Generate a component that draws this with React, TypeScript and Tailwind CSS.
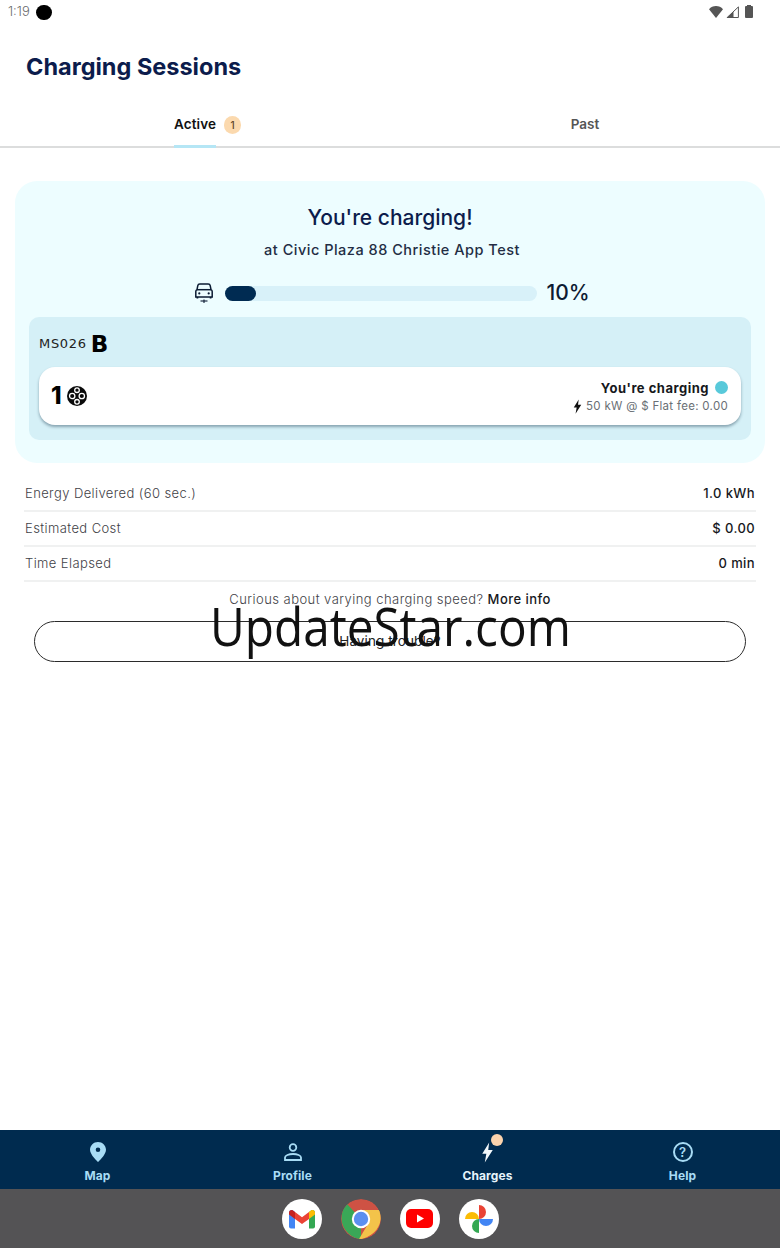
function Bolt({ className }: { className?: string }) {
  return (
    <svg viewBox="0 0 12 20" className={className} fill="currentColor">
      <path d="M7.600 0.500 1 11.200h3.900L3.400 19.500 11 7.600H6.700z" />
    </svg>
  );
}

function CarIcon() {
  return (
    <svg viewBox="0 0 18 20" className="h-[20px] w-[18px] text-[#0b1b33]" fill="none" stroke="currentColor" strokeWidth="1.500">
      <path d="M2.800 2.600C3 1.500 3.800 1 4.800 1h8.400c1 0 1.800.5 2 1.600l.8 4c.8.4 1.200 1 1.200 1.900V14H.8V8.500c0-.9.4-1.500 1.200-1.900z" />
      <path d="M2 6.700h14" />
      <circle cx="4.300" cy="10.400" r="1.100" fill="currentColor" stroke="none" />
      <circle cx="13.700" cy="10.400" r="1.100" fill="currentColor" stroke="none" />
      <path d="M2.400 14v1.400M15.600 14v1.400" strokeWidth="1.800" />
      <path d="M5.500 18h7" strokeWidth="1.100" />
      <path d="M9 16.500v3.500" strokeWidth="1.100" />
    </svg>
  );
}

function ConnectorIcon() {
  return (
    <svg viewBox="0 0 20 20" className="h-[20px] w-[20px]">
      <circle cx="10" cy="10" r="10" fill="#0a0a0a" />
      {[
        [10, 4.200, 2.300],
        [5.200, 10, 2.700],
        [14.800, 10, 2.700],
        [10, 15.800, 2.300],
      ].map(([cx, cy, r]) => (
        <circle key={`${cx}-${cy}`} cx={cx} cy={cy} r={r} fill="none" stroke="#fff" strokeWidth="1.300" />
      ))}
    </svg>
  );
}

function StatRow({ label, value }: { label: string; value: string }) {
  return (
    <div className="flex h-[35px] items-center justify-between border-b-2 border-[#f0f1f1] pt-[1px] text-[13px] tracking-[0.4px]">
      <span className="pl-[1px] font-light text-[#3f4247]">{label}</span>
      <span className="pr-[1px] font-medium text-[#16181c]">{value}</span>
    </div>
  );
}

function NavItem({ label, icon, active }: { label: string; icon: React.ReactNode; active?: boolean }) {
  return (
    <div className="relative flex flex-1 flex-col items-center pt-[9px]">
      <div className="flex h-[26px] items-center justify-center">{icon}</div>
      <span className={`mt-[3px] text-[12px] leading-[16px] font-bold tracking-[0.1px] ${active ? "text-[#e6f4fb]" : "text-[#a8dcf5]"}`}>{label}</span>
    </div>
  );
}

function DockIcon({ children }: { children: React.ReactNode }) {
  return <div className="flex h-10 w-10 items-center justify-center rounded-full bg-white">{children}</div>;
}

export default function App() {
  return (
    <div className="relative flex h-[1248px] w-[780px] flex-col overflow-hidden bg-white font-['Inter',sans-serif]">
      {/* Status bar */}
      <div className="flex h-6 shrink-0 items-center justify-between pr-[27px] pl-[8px]">
        <div className="flex items-center gap-[6px]">
          <span className="text-[13px] font-light text-[#6b6b6b]">1:19</span>
          <div className="h-[15px] w-[16px] rounded-full bg-black" />
        </div>
        <div className="flex items-center gap-[3px]">
          <svg viewBox="0 0 14 12" className="h-[12px] w-[14px]">
            <path d="M0 3.200C1.800 1.200 4.200 0 7 0s5.200 1.200 7 3.200L7 12z" fill="#555" />
          </svg>
          <svg viewBox="0 0 13 12" className="h-[12px] w-[13px]">
            <path d="M12.400.9V11.500H1.200z" fill="none" stroke="#555" strokeWidth="1" />
            <path d="M7.500 5.500V12H0.500z" fill="#555" />
          </svg>
          <div className="relative ml-[3px] h-[12px] w-[8px] rounded-[1px] bg-[#555]">
            <div className="absolute -top-[1px] left-[2px] h-[1px] w-[4px] bg-[#555]" />
          </div>
        </div>
      </div>

      <h1 className="mt-[28px] pl-[26px] text-[23.500px] leading-[30px] font-bold text-[#0c1c4c]">Charging Sessions</h1>

      {/* Tabs */}
      <div className="mt-[25px] flex h-[41px] shrink-0 border-b-2 border-[#dcdddd]">
        <div className="flex flex-1 items-start justify-center pt-[8px]">
          <div className="ml-[25px] flex items-center gap-[8px]">
            <span className="relative text-[13.500px] leading-[18px] font-semibold tracking-[0.1px] text-[#111]">
              Active
              <span className="absolute top-[30px] left-0 h-[3px] w-full bg-[#b5e6f5]" />
            </span>
            <span className="relative top-[1px] flex h-[18px] w-[17px] items-center justify-center rounded-full bg-[#fbd9ae] text-[10px] font-medium text-[#5e4427]">1</span>
          </div>
        </div>
        <div className="flex flex-1 items-start justify-center pt-[8px]">
          <span className="text-[13.500px] leading-[18px] font-semibold text-[#555]">Past</span>
        </div>
      </div>

      {/* Active session card */}
      <div className="mx-[15px] mt-[33px] flex h-[282px] shrink-0 flex-col items-center rounded-[22px] bg-[#edfdff] px-[14px]">
        <h2 className="mt-[23px] text-[21px] leading-[28px] font-medium text-[#0c1c4c]">You're charging!</h2>
        <p className="mt-[8px] ml-[4px] text-[14.500px] leading-[20px] font-medium tracking-[0.5px] text-[#232d44]">at Civic Plaza 88 Christie App Test</p>

        <div className="mt-[19px] ml-[5px] flex items-center">
          <CarIcon />
          <div className="mr-[9px] ml-[12px] h-[15px] w-[312px] rounded-full bg-[#d8f1f9]">
            <div className="h-full w-[31px] rounded-full bg-[#002b52]" />
          </div>
          <span className="text-[21px] leading-[28px] font-medium text-[#0d1b33]">10%</span>
        </div>

        <div className="mt-[10px] flex h-[123px] w-full flex-col rounded-[10px] bg-[#d5f0f7] px-[10px]">
          <div className="flex h-[50px] items-center gap-[4px] pt-[4px] font-['DejaVu_Sans',sans-serif]">
            <span className="text-[13px] tracking-[0.7px] text-[#222]">MS026</span>
            <span className="text-[23px] leading-none font-bold text-black">B</span>
          </div>
          <div className="flex h-[58px] w-[702px] items-center justify-between rounded-[16px] bg-white pr-[13px] pl-[12px] shadow-[0_2px_3px_rgba(40,70,90,0.45)]">
            <div className="flex items-center gap-[5px]">
              <span className="text-[24px] leading-none font-extrabold text-black">1</span>
              <ConnectorIcon />
            </div>
            <div className="flex flex-col items-end gap-[3px] pt-[1px]">
              <div className="flex items-center gap-[6px]">
                <span className="text-[13px] leading-[16px] font-bold tracking-[0.5px] text-[#16181c]">You're charging</span>
                <div className="h-[13px] w-[13px] rounded-full bg-[#58c9da]" />
              </div>
              <div className="flex items-center gap-[4px]">
                <Bolt className="h-[15px] w-[9px] text-[#111]" />
                <span className="text-[11.500px] leading-[15px] tracking-[0.3px] text-[#6a6f75]">50 kW @ $ Flat fee: 0.00</span>
              </div>
            </div>
          </div>
        </div>
      </div>

      {/* Session stats */}
      <div className="mx-[24px] mt-[14px] flex shrink-0 flex-col">
        <StatRow label="Energy Delivered (60 sec.)" value="1.0 kWh" />
        <StatRow label="Estimated Cost" value="$ 0.00" />
        <StatRow label="Time Elapsed" value="0 min" />
      </div>

      <p className="mt-[8px] text-center text-[13px] leading-[18px] font-light tracking-[0.45px] text-[#3f4247]">
        Curious about varying charging speed? <span className="font-medium text-[#16181c]">More info</span>
      </p>

      <button className="mx-[34px] mt-[13px] flex h-[41px] shrink-0 items-center justify-center rounded-full border border-[#2b2b2b] text-[13.500px] tracking-[0.1px] text-[#222]">
        Having trouble?
      </button>

      <div className="flex-1" />

      {/* Bottom nav */}
      <nav className="flex h-[59px] shrink-0 bg-[#002b4f]">
        <NavItem
          label="Map"
          icon={
            <svg viewBox="0 0 16 20" className="h-[20px] w-[16px]">
              <path fillRule="evenodd" fill="#a8dcf5" d="M8 0C3.600 0 0 3.400 0 7.800 0 13 8 20 8 20s8-7 8-12.200C16 3.400 12.400 0 8 0zm0 5.500a2.300 2.300 0 1 1 0 4.600 2.300 2.300 0 0 1 0-4.600z" />
            </svg>
          }
        />
        <NavItem
          label="Profile"
          icon={
            <svg viewBox="0 0 18 18" className="h-[18px] w-[18px]" fill="none" stroke="#a8dcf5" strokeWidth="1.800">
              <circle cx="9" cy="4.500" r="3.300" />
              <path d="M1 14.600c0-2.200 3.800-3.600 8-3.600s8 1.400 8 3.600V17H1z" />
            </svg>
          }
        />
        <NavItem
          active
          label="Charges"
          icon={
            <div className="relative">
              <Bolt className="h-[21px] w-[13px] text-[#f2f8fb]" />
              <div className="absolute -top-[8px] left-[10px] h-[12px] w-[12px] rounded-full bg-[#fbd3ad]" />
            </div>
          }
        />
        <NavItem
          label="Help"
          icon={
            <div className="flex h-[20px] w-[20px] items-center justify-center rounded-full border-2 border-[#a8dcf5] text-[13px] leading-none font-semibold text-[#a8dcf5]">?</div>
          }
        />
      </nav>

      {/* Android dock */}
      <div className="flex h-[59px] shrink-0 items-center justify-center gap-[19px] bg-[#545355]">
        <DockIcon>
          <svg viewBox="0 0 26 20" className="h-[20px] w-[26px]">
            <path fill="#4285f4" d="M0 3.500C0 1.500 2.300.3 4 1.500L6 3v16.500H2a2 2 0 0 1-2-2z" />
            <path fill="#34a853" d="M20 3l2-1.500c1.700-1.200 4-.0 4 2v14a2 2 0 0 1-2 2h-4z" />
            <path fill="#ea4335" d="M6 3l7 5.300L20 3v7l-7 5-7-5z" />
            <path fill="#c5221f" d="M0 3.500C0 1.500 2.300.3 4 1.500L6 3v7L0 5.500z" />
            <path fill="#fbbc04" d="M26 3.500c0-2-2.300-3.200-4-2L20 3v7l6-4.500z" />
          </svg>
        </DockIcon>
        <div className="h-10 w-10 overflow-hidden rounded-full">
          <svg viewBox="0 0 40 40" className="h-10 w-10">
            <circle cx="20" cy="20" r="20" fill="#ce5244" />
            <path fill="#3aa757" d="M20 20 6 5C-3 14-2 34 17.500 40H20z" />
            <path fill="#f3c34a" d="M20 11h18.500C42 20 39 35 21 40l-3 0 9-15z" />
            <circle cx="20" cy="20" r="9.200" fill="#fff" />
            <circle cx="20" cy="20" r="7.200" fill="#5c8ff0" />
          </svg>
        </div>
        <DockIcon>
          <svg viewBox="0 0 27 19" className="h-[19px] w-[27px]">
            <rect width="27" height="19" rx="5" fill="#f00" />
            <path d="M11 5.500 18 9.500l-7 4z" fill="#fff" />
          </svg>
        </DockIcon>
        <DockIcon>
          <svg viewBox="0 0 28 28" className="h-[28px] w-[28px]">
            <path fill="#fbbc04" d="M0 14a7 7 0 0 1 14 0z" />
            <path fill="#ea4335" d="M14 0a7 7 0 0 1 0 14z" />
            <path fill="#4285f4" d="M28 14a7 7 0 0 1-14 0z" />
            <path fill="#34a853" d="M14 28a7 7 0 0 1 0-14z" />
          </svg>
        </DockIcon>
      </div>

      {/* Watermark */}
      <span className="absolute top-[590px] left-[210px] origin-left scale-x-[0.9] font-['Open_Sans',sans-serif] text-[53px] leading-[72px] whitespace-nowrap text-[#111]">UpdateStar.com</span>
    </div>
  );
}
